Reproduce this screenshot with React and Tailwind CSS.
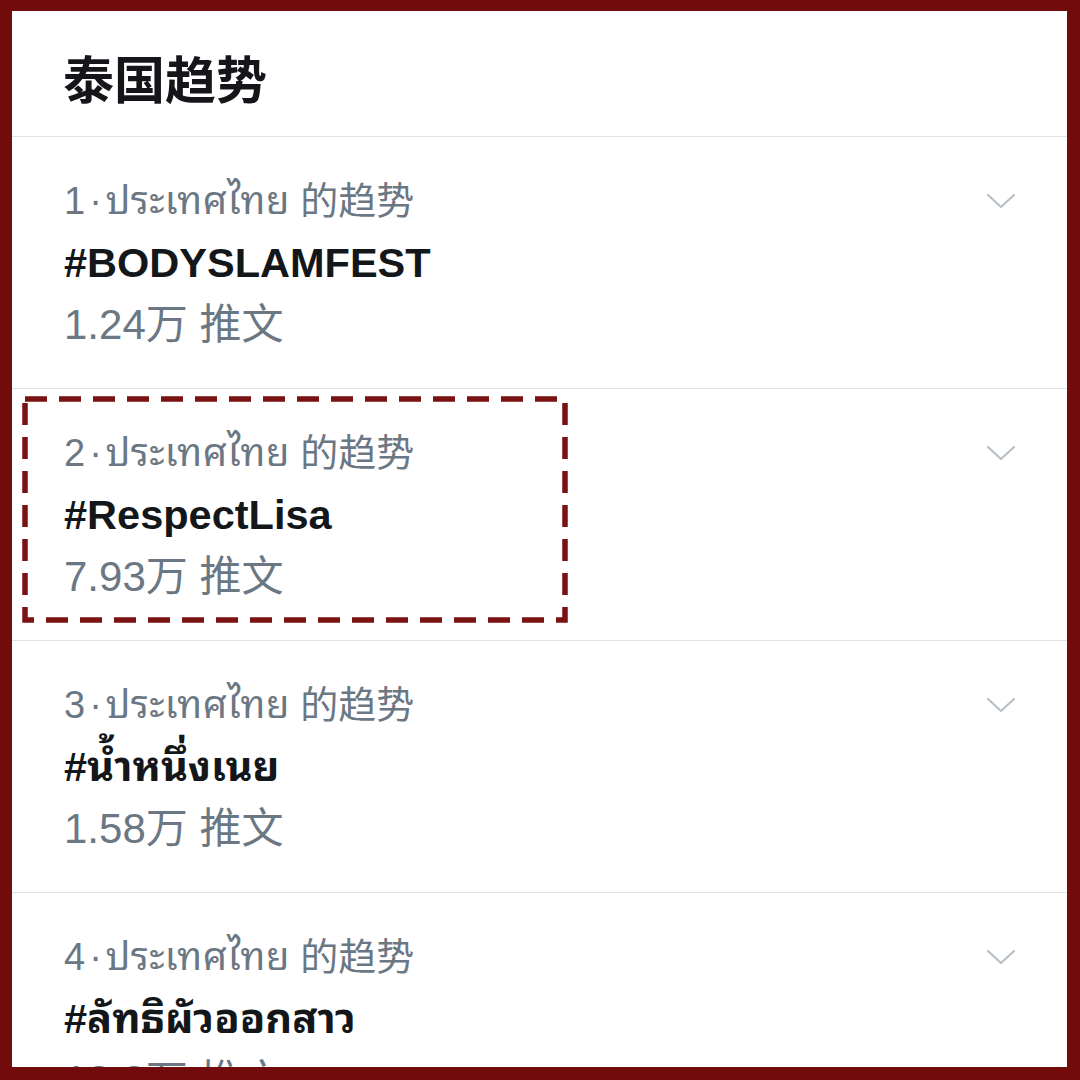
import React from 'react';

const trends = [
  { rank: 1, tag: '#BODYSLAMFEST', count: '1.24万 推文' },
  { rank: 2, tag: '#RespectLisa', count: '7.93万 推文', marked: true },
  { rank: 3, tag: '#น้ำหนึ่งเนย', count: '1.58万 推文' },
  { rank: 4, tag: '#ลัทธิผัวออกสาว', count: '13.3万 推文' },
];

const font = { fontFamily: '"Liberation Sans", "Noto Sans Thai Looped", "Noto Sans Thai", "Noto Sans CJK SC", sans-serif' };

function Chevron() {
  return (
    <svg width="30" height="18" viewBox="0 0 30 18" fill="none" className="mt-[22px]">
      <path d="M2 3 L15 15 L28 3" stroke="#b7c0c8" strokeWidth="2.2" strokeLinecap="round" strokeLinejoin="round" />
    </svg>
  );
}

export default function App() {
  return (
    <div className="w-[1080px] h-[1080px] bg-[#720b0b] pt-[11px] pl-[12px] pr-[13px] pb-[13px]" style={font}>
      <div className="w-full h-full bg-white overflow-hidden">
        {/* Header */}
        <div className="h-[126px] flex items-start pl-[51px] pt-[45px] border-b border-[#dfe3e7]">
          <h1 className="text-[51px] font-bold text-[#141619] leading-none">泰国趋势</h1>
        </div>

        {trends.map((t) => (
          <div key={t.rank} className="relative flex justify-between pl-[52px] pr-[51px] pt-[33px] pb-[32px] border-b border-[#dfe3e7]">
            <div>
              <div className="h-[62px] leading-[62px] text-[38px] text-[#6b7783] whitespace-nowrap">
                {t.rank}<span className="mx-[4px]">·</span><span className="tracking-[0.5px]">ประเทศไทย</span> 的趋势
              </div>
              <div className="h-[62px] leading-[62px] text-[41.5px] font-bold text-[#14171a] whitespace-nowrap">
                {t.tag}
              </div>
              <div className="h-[62px] leading-[62px] text-[42px] text-[#6b7783] whitespace-nowrap">
                {t.count}
              </div>
            </div>
            <Chevron />

            {t.marked && (
              <svg className="absolute left-[10px] top-[7px]" width="546" height="227" viewBox="0 0 546 227" fill="none">
                <rect x="3" y="3" width="540" height="221" stroke="#7a1212" strokeWidth="5.5" strokeDasharray="22 12" />
              </svg>
            )}
          </div>
        ))}
      </div>
    </div>
  );
}
